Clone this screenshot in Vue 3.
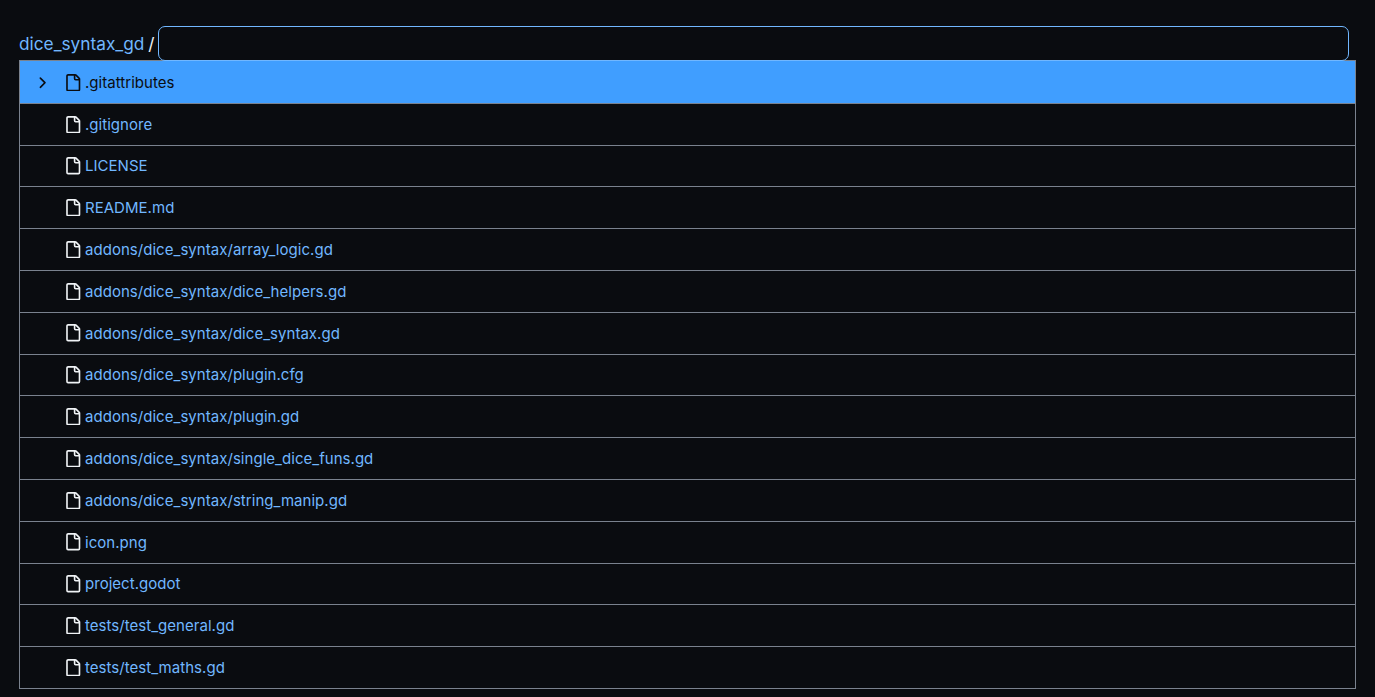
<template>
  <div class="page">
    <div class="crumbs">
      <a class="repo">dice_syntax_gd</a>
      <span class="slash">/</span>
      <input class="finder" type="text" />
    </div>
    <ul class="list">
      <li
        v-for="(file, i) in files"
        :key="file"
        class="row"
        :class="{ active: i === 0 }"
      >
        <span class="arrow">
          <svg v-if="i === 0" viewBox="0 0 16 16" width="17.4" height="17.4">
            <path d="M6.22 3.22a.75.75 0 0 1 1.06 0l4.25 4.25a.75.75 0 0 1 0 1.06l-4.25 4.25a.751.751 0 0 1-1.042-.018.751.751 0 0 1-.018-1.042L9.94 8 6.22 4.28a.75.75 0 0 1 0-1.06Z" />
          </svg>
        </span>
        <svg class="file-icon" viewBox="0 0 16 16" width="17.4" height="17.4">
          <path d="M2 1.75C2 .784 2.784 0 3.75 0h6.586c.464 0 .909.184 1.237.513l2.914 2.914c.329.328.513.773.513 1.237v9.586A1.75 1.75 0 0 1 13.25 16h-9.5A1.75 1.75 0 0 1 2 14.25Zm1.75-.25a.25.25 0 0 0-.25.25v12.5c0 .138.112.25.25.25h9.5a.25.25 0 0 0 .25-.25V6h-2.75A1.75 1.75 0 0 1 9 4.25V1.5Zm6.75.062V4.25c0 .138.112.25.25.25h2.688l-.011-.013-2.914-2.914-.013-.011Z" />
        </svg>
        <span class="name">{{ file }}</span>
      </li>
    </ul>
  </div>
</template>

<script setup>
const files = [
  ".gitattributes",
  ".gitignore",
  "LICENSE",
  "README.md",
  "addons/dice_syntax/array_logic.gd",
  "addons/dice_syntax/dice_helpers.gd",
  "addons/dice_syntax/dice_syntax.gd",
  "addons/dice_syntax/plugin.cfg",
  "addons/dice_syntax/plugin.gd",
  "addons/dice_syntax/single_dice_funs.gd",
  "addons/dice_syntax/string_manip.gd",
  "icon.png",
  "project.godot",
  "tests/test_general.gd",
  "tests/test_maths.gd"
];
</script>

<style>
html,
body {
  background: #0a0c10;
  margin: 0;
}
</style>

<style scoped>
.page {
  box-sizing: border-box;
  height: 697px;
  overflow: hidden;
  padding: 26px 19px 0;
  background: #0a0c10;
  font-family: Inter, "Liberation Sans", sans-serif;
  font-size: 15px;
  letter-spacing: 0.04px;
}

.crumbs {
  display: flex;
  align-items: center;
  height: 34px;
  padding-right: 7px;
  font-size: 17.25px;
  letter-spacing: 0;
}

.repo {
  color: #71b7ff;
}

.slash {
  margin: 0 3px 0 4px;
  color: #f0f3f6;
}

.finder {
  flex: 1;
  box-sizing: border-box;
  height: 35px;
  border: 1px solid #71b7ff;
  border-radius: 7px;
  background: transparent;
  outline: none;
}

.list {
  margin: 0;
  padding: 0;
  list-style: none;
  border: 1px solid #7a828e;
  border-bottom-width: 0;
}

.row {
  display: flex;
  align-items: center;
  box-sizing: border-box;
  height: 41.8px;
  padding-left: 13px;
  border-bottom: 1px solid #7a828e;
  color: #71b7ff;
}

.row.active {
  height: 42.8px;
  padding-top: 1px;
  background: #409eff;
  color: #0a0c10;
}

.arrow {
  display: flex;
  width: 17.4px;
  height: 17.4px;
  margin-right: 13.6px;
}

.arrow svg,
.row.active .file-icon {
  fill: #0a0c10;
}

.file-icon {
  flex-shrink: 0;
  margin-right: 3.6px;
  fill: #f0f3f6;
}
</style>
